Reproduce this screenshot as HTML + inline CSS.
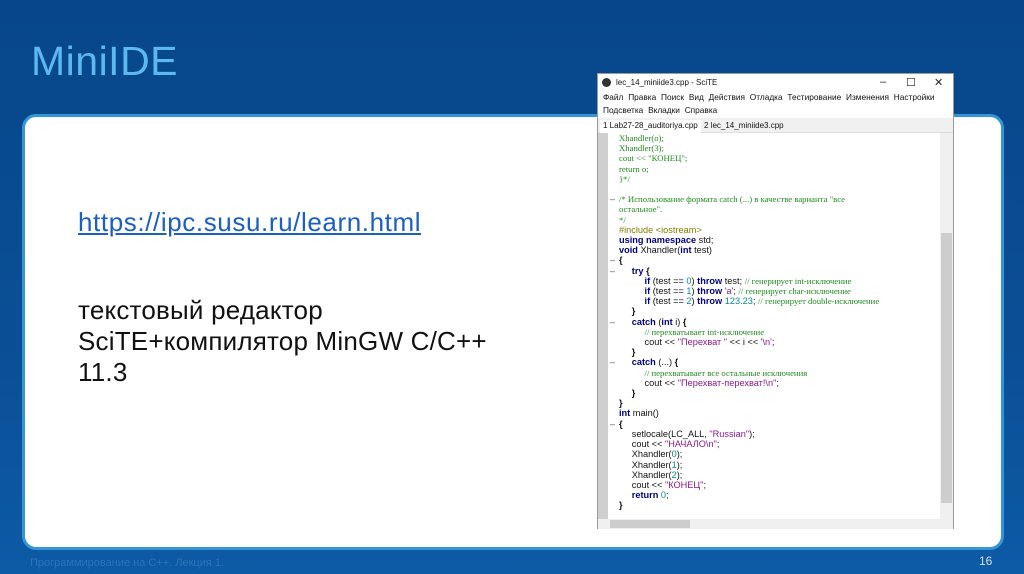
<!DOCTYPE html>
<html><head><meta charset="utf-8">
<style>
*{margin:0;padding:0;box-sizing:border-box}
body{width:1024px;height:574px;overflow:hidden;position:relative;font-family:"Liberation Sans",sans-serif;
background:linear-gradient(180deg,#07468a 0%,#0a4f96 60%,#0d5aa6 100%);}
.title{position:absolute;left:31px;top:38px;font-size:41px;color:#5cb8ee;letter-spacing:0.5px}
.panel{position:absolute;left:22px;top:114px;width:982px;height:436px;background:#fff;border:3px solid #3396d6;border-radius:14px}
.txt{position:absolute;left:78px;font-size:26px;color:#111;line-height:31px}
.link{top:207px;color:#1b5fc1;text-decoration:underline;letter-spacing:0.6px}
.desc{top:295px;letter-spacing:0.2px}
.foot{position:absolute;left:30px;top:557px;font-size:11px;color:#2e74b8}
.num{position:absolute;left:979px;top:554px;font-size:12px;color:#cfe2f5}
.win{position:absolute;left:597px;top:73px;width:357px;height:456px;background:#fff;border:1px solid #9a9a9a;font-size:8.5px;color:#111}
.tb{height:17px;position:relative}
.tb .ic{position:absolute;left:4px;top:4px;width:9px;height:9px;border-radius:50%;background:#333}
.tb .t{position:absolute;left:18px;top:4px;font-size:8px}
.tb .c{position:absolute;top:2px;font-size:11px;color:#222}
.menu{line-height:13px;padding-left:5px;font-size:8.3px;word-spacing:2.5px}
.tabs{position:absolute;top:44px;left:0;width:355px;height:15px;background:#f0f0f0;border-bottom:1px solid #ddd}
.tab{position:absolute;top:2px;height:13px;line-height:12px;font-size:8px;padding:0 3px}
.ed{position:absolute;top:59px;left:0;width:342px;height:386px;overflow:hidden}
.gm{position:absolute;left:0;top:0;width:10px;height:386px;background:#cfcfcf}
.code{position:absolute;left:21px;top:0;font-size:9.2px;line-height:10.2px;white-space:pre;font-family:"Liberation Sans",sans-serif}
.f{position:absolute;left:12px;font-size:9px;line-height:10.2px;color:#555}
.cm{color:#1f8a1f;font-family:"Liberation Serif",serif;font-size:8.7px}
.kw{color:#00007f;font-weight:bold}
.st{color:#8a1a8a}
.nm{color:#0a8a8a}
.pp{color:#7f7f00}
.vs{position:absolute;left:342px;top:59px;width:13px;height:386px;background:#f0f0f0}
.vs .th{position:absolute;left:1px;top:100px;width:11px;height:270px;background:#cdcdcd}
.hs{position:absolute;left:0;top:445px;width:355px;height:10px;background:#f0f0f0}
.hs .th{position:absolute;left:12px;top:1px;width:80px;height:8px;background:#cdcdcd}
</style></head><body>
<div class="title">MiniIDE</div>
<div class="panel"></div>
<div class="txt link">https://ipc.susu.ru/learn.html</div>
<div class="txt desc">текстовый редактор<br>SciTE+компилятор MinGW C/C++<br>11.3</div>
<div class="foot">Программирование на С++. Лекция 1.</div>
<div class="num">16</div>

<div class="win">
 <div class="tb"><div class="ic"></div><div class="t">lec_14_miniide3.cpp - SciTE</div>
 <div class="c" style="left:282px">–</div><div class="c" style="left:308px">☐</div><div class="c" style="left:336px">✕</div></div>
 <div class="menu">Файл Правка Поиск Вид Действия Отладка Тестирование Изменения Настройки<br>Подсветка Вкладки Справка</div>
 <div class="tabs"><div class="tab" style="left:2px;background:#fff">1 Lab27-28_auditoriya.cpp</div><div class="tab" style="left:103px">2 lec_14_miniide3.cpp</div></div>
 <div class="ed"><div class="gm"></div>
<div class="f" style="top:61.2px">–</div>
<div class="f" style="top:122.4px">–</div>
<div class="f" style="top:132.6px">–</div>
<div class="f" style="top:183.6px">–</div>
<div class="f" style="top:224.4px">–</div>
<div class="f" style="top:285.6px">–</div>
<div class="code"><span class="cm">Xhandler(o);
Xhandler(3);
cout &lt;&lt; "КОНЕЦ";
return o;
}*/

/* Использование формата catch (...) в качестве варианта "все
остальное".
*/</span>
<span class="pp">#include &lt;iostream&gt;</span>
<span class="kw">using namespace</span> std;
<span class="kw">void</span> Xhandler(<span class="kw">int</span> test)
<b>{</b>
     <span class="kw">try</span> <b>{</b>
          <span class="kw">if</span> (test == <span class="nm">0</span>) <span class="kw">throw</span> test; <span class="cm">// генерирует int-исключение</span>
          <span class="kw">if</span> (test == <span class="nm">1</span>) <span class="kw">throw</span> <span class="st">'a'</span>; <span class="cm">// генерирует char-исключение</span>
          <span class="kw">if</span> (test == <span class="nm">2</span>) <span class="kw">throw</span> <span class="nm">123.23</span>; <span class="cm">// генерирует double-исключение</span>
     <b>}</b>
     <span class="kw">catch</span> (<span class="kw">int</span> i) <b>{</b>
          <span class="cm">// перехватывает int-исключение</span>
          cout &lt;&lt; <span class="st">"Перехват "</span> &lt;&lt; i &lt;&lt; <span class="st">'\n'</span>;
     <b>}</b>
     <span class="kw">catch</span> (...) <b>{</b>
          <span class="cm">// перехватывает все остальные исключения</span>
          cout &lt;&lt; <span class="st">"Перехват-перехват!\n"</span>;
     <b>}</b>
<b>}</b>
<span class="kw">int</span> main()
<b>{</b>
     setlocale(LC_ALL, <span class="st">"Russian"</span>);
     cout &lt;&lt; <span class="st">"НАЧАЛО\n"</span>;
     Xhandler(<span class="nm">0</span>);
     Xhandler(<span class="nm">1</span>);
     Xhandler(<span class="nm">2</span>);
     cout &lt;&lt; <span class="st">"КОНЕЦ"</span>;
     <span class="kw">return</span> <span class="nm">0</span>;
<b>}</b></div>
 </div>
 <div class="vs"><div class="th"></div></div>
 <div class="hs"><div class="th"></div></div>
</div>
</body></html>
